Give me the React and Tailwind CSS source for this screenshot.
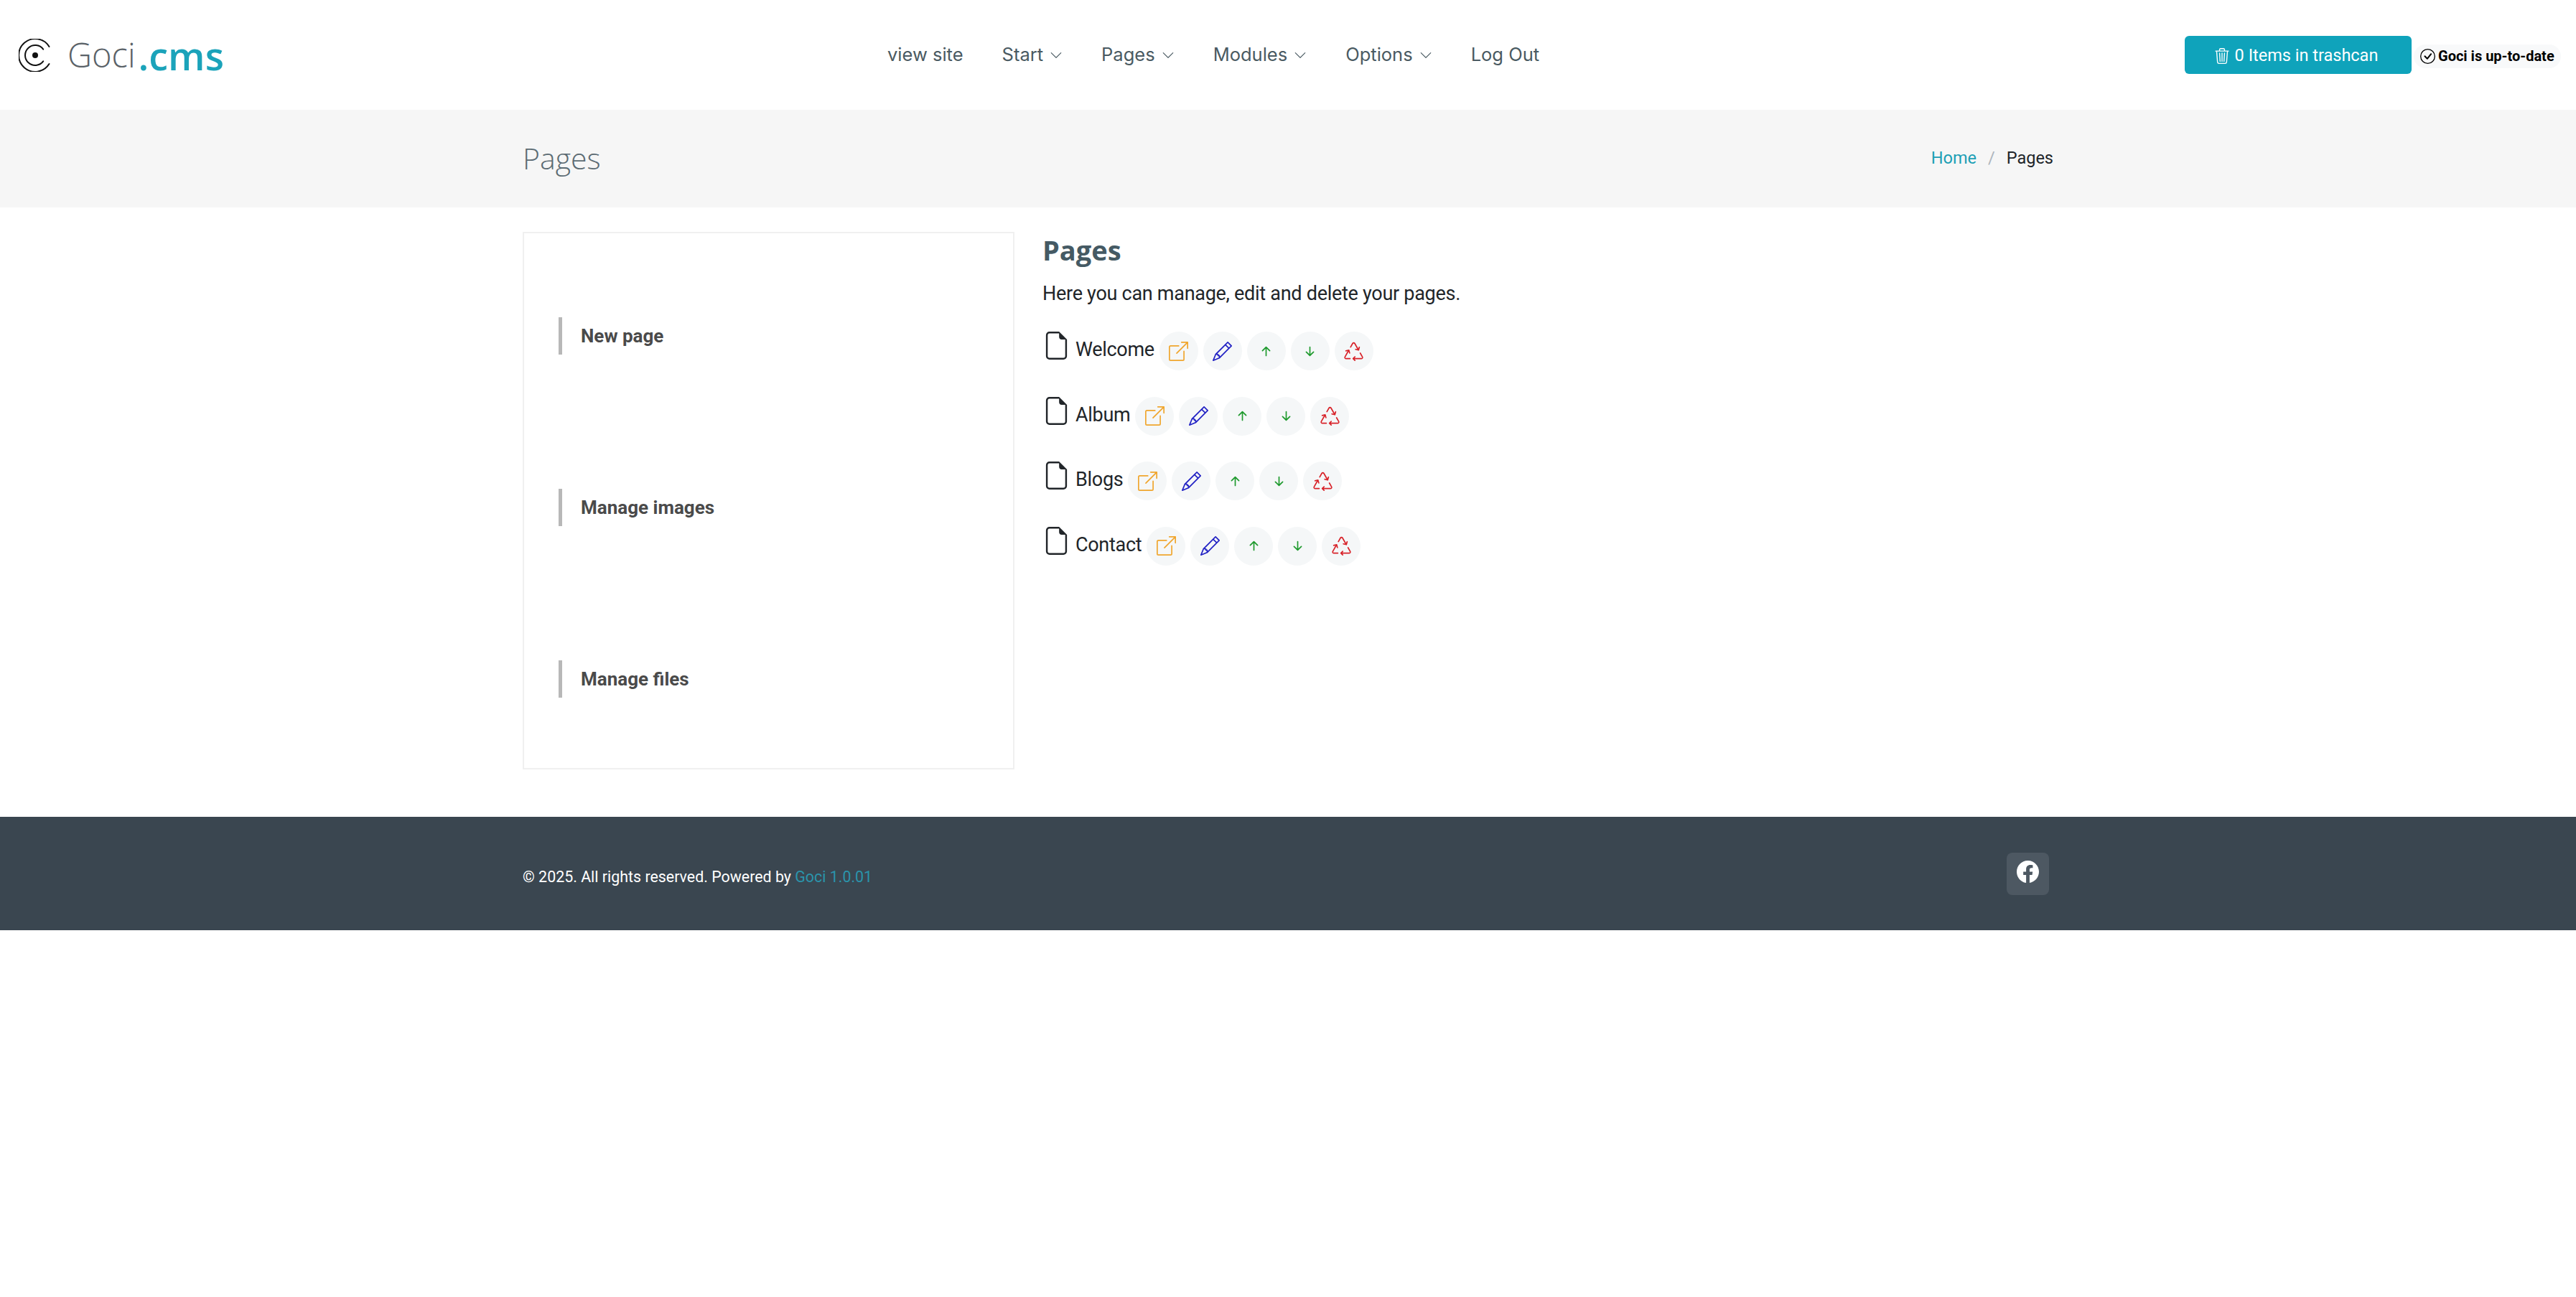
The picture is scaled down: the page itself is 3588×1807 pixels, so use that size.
import { BsArrowDownShort, BsArrowUpShort, BsBoxArrowUpRight, BsCheckCircle, BsChevronDown, BsFacebook, BsFileEarmark, BsPencil, BsRecycle, BsTrash3 } from 'react-icons/bs';

const NAV = [
  { label: 'view site' },
  { label: 'Start', menu: true },
  { label: 'Pages', menu: true },
  { label: 'Modules', menu: true },
  { label: 'Options', menu: true },
  { label: 'Log Out' },
];

const SIDE_LINKS = ['New page', 'Manage images', 'Manage files'];
const PAGES = ['Welcome', 'Album', 'Blogs', 'Contact'];

function Logo() {
  return (
    <svg viewBox="0 0 46 46" className="w-[46px] h-[46px] shrink-0" fill="none" stroke="#111" strokeWidth="2" strokeLinecap="round">
      <path d="M42.5 11A22.9 22.9 0 1 0 42.5 35" />
      <path d="M34.2 14.6A14 14 0 1 0 34.2 31.4" />
      <circle cx="23" cy="23" r="4" fill="#111" stroke="none" />
    </svg>
  );
}

function Action({ children }) {
  return (
    <button type="button" className="w-[54px] h-[54px] rounded-full bg-[#f5f7f8] flex items-center justify-center shrink-0">
      {children}
    </button>
  );
}

function PageRow({ name }) {
  return (
    <div className="flex items-start h-[54px] mb-[36.5px]">
      <BsFileEarmark className="text-[39px] text-[#212529] shrink-0" />
      <span className="ml-[7px] mr-[7px] h-[50px] leading-[50px] text-[27px] tracking-[-0.3px] text-[#212529]">{name}</span>
      <div className="flex gap-[7px]">
        <Action><BsBoxArrowUpRight className="text-[27px] text-[#f0a62e]" /></Action>
        <Action><BsPencil className="text-[27px] text-[#2222c4]" /></Action>
        <Action><BsArrowUpShort className="text-[27px] text-[#1f9a2e]" /></Action>
        <Action><BsArrowDownShort className="text-[27px] text-[#1f9a2e]" /></Action>
        <Action><BsRecycle className="text-[27px] text-[#d8232a]" /></Action>
      </div>
    </div>
  );
}

export default function App() {
  return (
    <div className="min-h-screen bg-white font-['Roboto',sans-serif]">
      <header className="h-[153px] flex items-center pl-[26px] pr-[21px]">
        <div className="w-[1210px] shrink-0 flex items-center">
          <Logo />
          <span className="ml-[22px] text-[47px] font-light text-[#5a6268] font-['Open_Sans',sans-serif]">Goci</span>
          <span className="ml-[4px] text-[54px] leading-[64px] font-semibold text-[#1ba3ba] font-['Open_Sans',sans-serif]">.cms</span>
        </div>
        <nav className="flex items-center gap-[54px] font-['Inter',sans-serif] text-[25.5px] text-[#4a5a62]">
          {NAV.map(item => (
            <a key={item.label} className="flex items-center gap-[9px]">
              {item.label}
              {item.menu && <BsChevronDown className="text-[18px]" />}
            </a>
          ))}
        </nav>
        <div className="ml-auto flex items-center gap-[3px]">
          <button type="button" className="w-[316px] h-[53px] rounded-[6px] bg-[#0fa3bb] text-white text-[23.5px] pt-[2px] pr-[6px] flex items-center justify-center gap-[7px]">
            <BsTrash3 className="text-[22px]" />
            0 Items in trashcan
          </button>
          <span className="w-[205px] h-[33px] mt-[3px] rounded-full bg-[#f8f9fa] flex items-center pl-[9px] gap-[4px] text-[20px] font-bold text-black">
            <BsCheckCircle className="text-[21px]" />
            Goci is up-to-date
          </span>
        </div>
      </header>

      <div className="h-[136px] bg-[#f6f6f6]">
        <div className="w-[2132px] h-full mx-auto flex items-center justify-between">
          <h1 className="text-[41px] font-light text-[#5c6b73] font-['Open_Sans',sans-serif]">Pages</h1>
          <div className="flex items-center text-[23.5px] text-[#212529]">
            <a className="text-[#1d9fb5]">Home</a>
            <span className="mx-[16px] text-[#adb5bd]">/</span>
            <span>Pages</span>
          </div>
        </div>
      </div>

      <main className="w-[2132px] mx-auto pt-[34px] flex">
        <aside className="w-[685px] h-[749px] border-2 border-[#f0f0f0] pt-[117px] pl-[48px] flex flex-col gap-[187px] shrink-0">
          {SIDE_LINKS.map(link => (
            <a key={link} className="h-[52px] border-l-[5px] border-[#b8b8b8] pl-[26px] flex items-center text-[26px] font-bold text-[#4a4a4a]">{link}</a>
          ))}
        </aside>
        <section className="ml-[39px]">
          <h2 className="text-[38px] leading-[52px] mt-[-1px] font-bold text-[#455a64] font-['Open_Sans',sans-serif]">Pages</h2>
          <p className="text-[27px] tracking-[-0.28px] leading-[42px] mt-[14px] mb-[32px] text-[#212529]">Here you can manage, edit and delete your pages.</p>
          {PAGES.map(name => <PageRow key={name} name={name} />)}
        </section>
      </main>

      <footer className="mt-[66px] h-[158px] bg-[#3a4650]">
        <div className="w-[2132px] h-full mx-auto flex items-center justify-between">
          <p className="text-[21.4px] text-white pt-[10px]">© 2025. All rights reserved. Powered by <a className="text-[#2a94ab]">Goci 1.0.01</a></p>
          <a className="w-[59px] h-[59px] mr-[6px] pb-[5px] rounded-[8px] bg-[#4d5862] flex items-center justify-center text-white">
            <BsFacebook className="text-[31px]" />
          </a>
        </div>
      </footer>
    </div>
  );
}
